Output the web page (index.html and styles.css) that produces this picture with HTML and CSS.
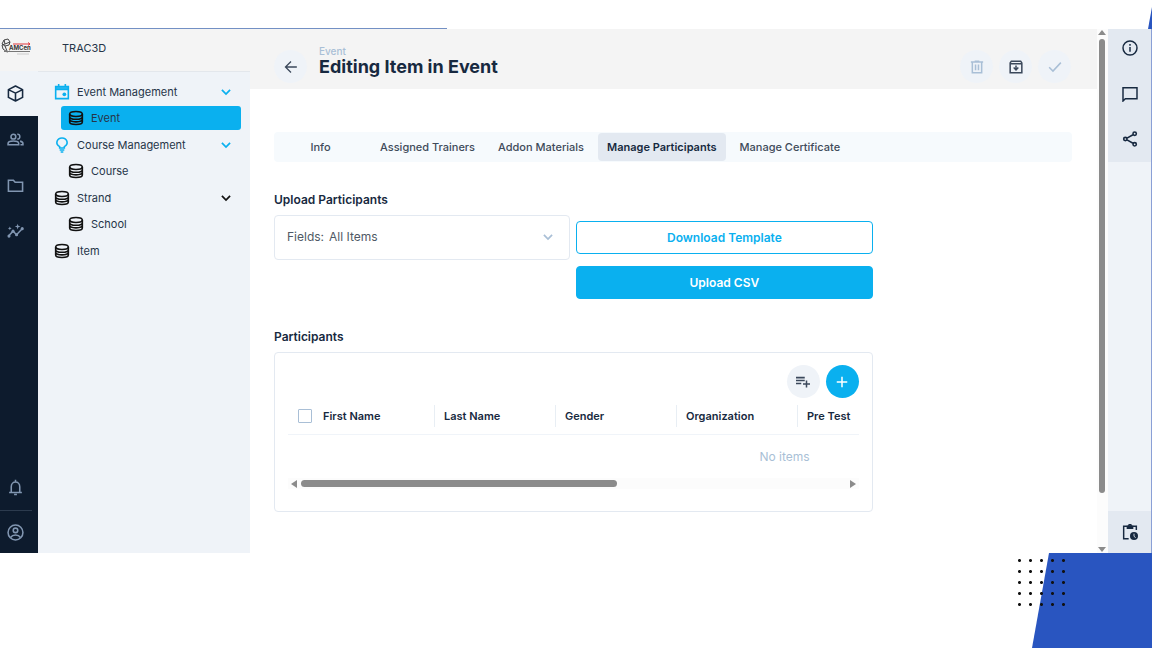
FILE: index.html
```
<!DOCTYPE html>
<html lang="en">
<head>
    <meta charset="UTF-8">
    <meta name="viewport" content="width=device-width, initial-scale=1.0">
    <title>TRAC3D - Editing Item in Event</title>
    <link rel="stylesheet" href="styles.css">
</head>
<body>
    <!-- Shared icons -->
    <svg class="sprite" aria-hidden="true">
        <symbol id="database" viewBox="0 0 24 24">
            <g fill="none" stroke="currentColor" stroke-width="2.4">
                <ellipse cx="12" cy="6" rx="9.5" ry="3.8"/>
                <path d="M2.5 6v12c0 2.2 4.2 3.8 9.5 3.8s9.5-1.6 9.5-3.8V6M2.5 10c0 2.2 4.2 3.8 9.5 3.8s9.5-1.6 9.5-3.8M2.5 14c0 2.2 4.2 3.8 9.5 3.8s9.5-1.6 9.5-3.8"/>
            </g>
        </symbol>
        <symbol id="chevron" viewBox="0 0 24 24">
            <path d="M5 8.5l7 7 7-7" fill="none" stroke="currentColor" stroke-width="3"/>
        </symbol>
    </svg>

    <div class="top-line"></div>

    <div class="app">
        <!-- Module bar -->
        <nav class="modules" aria-label="Modules">
            <a href="#" class="logo" aria-label="AMCen">
                <svg width="32" height="18" viewBox="0 0 32 18">
                    <g fill="none" stroke="#444" stroke-width="1">
                        <path d="M4 2l4-1 2 3-1 3-4 1-3-2zM4 2l1 4-3 1M5 6l5-2M2 7l1 4 4 3 3-1M5 8l2 5"/>
                    </g>
                    <text x="9" y="12" class="logo-text">AMCen</text>
                    <path d="M13 6h17M28 4.5l2 1.5-2 1.5" fill="none" stroke="#e0383e" stroke-width="1"/>
                    <path d="M4 13.5h26" stroke="#777" stroke-width="1"/>
                    <path d="M17 16h12" stroke="#ccc" stroke-width="1"/>
                </svg>
            </a>
            <a href="#" class="module active" aria-label="Content">
                <svg viewBox="0 0 24 24" fill="none" stroke="currentColor" stroke-width="2.2" stroke-linejoin="round"><path d="M12 1.5l10 5v11l-10 5-10-5v-11zM2 6.5l10 5 10-5M12 11.5v11"/></svg>
            </a>
            <a href="#" class="module" aria-label="Users">
                <svg viewBox="0 0 24 24" fill="none" stroke="currentColor" stroke-width="2.2"><circle cx="9" cy="8" r="3.4"/><path d="M1.5 19.5v-2c0-2.5 3.5-3.5 7.5-3.5s7.5 1 7.5 3.5v2zM14.5 4.5c4.8-.5 4.8 7.4 0 6.9M18.5 14.3c2.5.6 4 1.7 4 3.4v1.8h-3.5"/></svg>
            </a>
            <a href="#" class="module" aria-label="Files">
                <svg viewBox="0 0 24 24" fill="none" stroke="currentColor" stroke-width="2.2"><path d="M2 4.5h7l2.5 3H22v12.5H2z"/></svg>
            </a>
            <a href="#" class="module" aria-label="Insights">
                <svg viewBox="0 0 24 24" fill="none" stroke="currentColor" stroke-width="2.2"><path d="M2.5 18l6-6.5 5 5L21.5 8"/><g fill="currentColor" stroke="none"><circle cx="2.8" cy="18.5" r="2.2"/><circle cx="8.5" cy="11.5" r="2.2"/><circle cx="13.5" cy="16.5" r="2.2"/><circle cx="21.5" cy="8" r="2.2"/><path d="M15 1l1 3 3 1-3 1-1 3-1-3-3-1 3-1zM4 5l.8 1.8 1.8.8-1.8.8L4 10.2l-.8-1.8-1.8-.8 1.8-.8z"/></g></svg>
            </a>
            <div class="modules-bottom">
                <a href="#" class="module" aria-label="Notifications">
                    <svg viewBox="0 0 24 24" fill="none" stroke="currentColor" stroke-width="2.2"><path d="M3 19h18M6 19v-8c0-9 12-9 12 0v8M12 1v3.5M10 22h4"/></svg>
                </a>
                <a href="#" class="module profile" aria-label="Profile">
                    <svg viewBox="0 0 24 24" fill="none" stroke="currentColor" stroke-width="2.2"><circle cx="12" cy="12" r="10.5"/><circle cx="12" cy="9" r="3.2"/><path d="M5 19c3-4.5 11-4.5 14 0"/></svg>
                </a>
            </div>
        </nav>

        <!-- Collections -->
        <nav class="sidebar" aria-label="Collections">
            <div class="project">TRAC3D</div>
            <div class="collections">
                <a href="#" class="group">
                    <svg class="icon accent" viewBox="0 0 24 24" fill="none" stroke="currentColor" stroke-width="2.4"><path d="M2.5 4h19v18h-19zM2.5 8h19M7 0v4M17 0v4"/><path d="M2.5 6h19"/><circle cx="15.5" cy="15.5" r="2.8" fill="currentColor" stroke="none"/></svg>
                    Event Management
                    <svg class="chevron accent"><use href="#chevron"/></svg>
                </a>
                <a href="#" class="child selected"><svg class="icon"><use href="#database"/></svg>Event</a>
                <a href="#" class="group">
                    <svg class="icon accent" viewBox="0 0 24 24" fill="none" stroke="currentColor" stroke-width="2.4"><path d="M8.5 16.5v-2C1 10.5 4.500 1.5 12 1.5s11 9 3.5 13v2zM8.5 19.5h7M10 22.500h4"/></svg>
                    Course Management
                    <svg class="chevron accent"><use href="#chevron"/></svg>
                </a>
                <a href="#" class="child"><svg class="icon"><use href="#database"/></svg>Course</a>
                <a href="#" class="group">
                    <svg class="icon"><use href="#database"/></svg>
                    Strand
                    <svg class="chevron"><use href="#chevron"/></svg>
                </a>
                <a href="#" class="child"><svg class="icon"><use href="#database"/></svg>School</a>
                <a href="#" class="group"><svg class="icon"><use href="#database"/></svg>Item</a>
            </div>
        </nav>

        <!-- Item editor -->
        <main class="main">
            <header class="header">
                <button class="round back" aria-label="Back">
                    <svg viewBox="0 0 24 24" fill="none" stroke="currentColor" stroke-width="2.2"><path d="M22 12H3M12 2.5L2.5 12l9.5 9.5"/></svg>
                </button>
                <div class="headline">
                    <a href="#">Event</a>
                    <h1>Editing Item in Event</h1>
                </div>
                <div class="actions">
                    <button class="round muted" aria-label="Delete">
                        <svg viewBox="0 0 24 24" fill="none" stroke="currentColor" stroke-width="2.6"><path d="M1.5 3.5h21M8 2h8M4 3.5v18.5h16V3.5M9.5 7.5v10M14.5 7.5v10"/></svg>
                    </button>
                    <button class="round" aria-label="Archive">
                        <svg viewBox="0 0 24 24" fill="none" stroke="currentColor" stroke-width="2.6"><path d="M2 5l2-3h16l2 3v17H2zM2 6.5h20M12 9.5v7M8 13l4 4 4-4"/></svg>
                    </button>
                    <button class="round muted" aria-label="Save">
                        <svg viewBox="0 0 24 24" fill="none" stroke="currentColor" stroke-width="2.6"><path d="M2 12.5l6.5 6.5L22 4.5"/></svg>
                    </button>
                </div>
            </header>

            <div class="content">
                <div class="tabs" role="tablist">
                    <button role="tab" class="tab">Info</button>
                    <button role="tab" class="tab">Assigned Trainers</button>
                    <button role="tab" class="tab">Addon Materials</button>
                    <button role="tab" class="tab active" aria-selected="true">Manage Participants</button>
                    <button role="tab" class="tab">Manage Certificate</button>
                </div>

                <section class="field">
                    <h2>Upload Participants</h2>
                    <div class="upload">
                        <div class="select-box">
                            <label for="fields">Fields:</label>
                            <select id="fields">
                                <option>All Items</option>
                            </select>
                            <svg class="chevron"><use href="#chevron"/></svg>
                        </div>
                        <div class="upload-buttons">
                            <button class="btn outline">Download Template</button>
                            <button class="btn">Upload CSV</button>
                        </div>
                    </div>
                </section>

                <section class="field">
                    <h2>Participants</h2>
                    <div class="card">
                        <div class="card-actions">
                            <button class="round" aria-label="Add existing">
                                <svg viewBox="0 0 24 24" fill="none" stroke="currentColor" stroke-width="2.6"><path d="M0 4.5h15M0 9.5h15M0 14.5h9M18 9.5v12M12 15.5h12"/></svg>
                            </button>
                            <button class="round primary" aria-label="Create new">
                                <svg viewBox="0 0 24 24" fill="none" stroke="currentColor" stroke-width="2.6"><path d="M12 3v18M3 12h18"/></svg>
                            </button>
                        </div>
                        <div class="table-wrap">
                            <table>
                                <thead>
                                    <tr>
                                        <th class="first"><label><input type="checkbox">First Name</label></th>
                                        <th>Last Name</th>
                                        <th>Gender</th>
                                        <th>Organization</th>
                                        <th>Pre Test</th>
                                        <th></th>
                                        <th></th>
                                        <th></th>
                                    </tr>
                                </thead>
                                <tbody>
                                    <tr><td colspan="8">No items</td></tr>
                                </tbody>
                            </table>
                        </div>
                        <div class="scroll-x">
                            <span class="arrow left"></span>
                            <div class="track"><div class="thumb"></div></div>
                            <span class="arrow right"></span>
                        </div>
                    </div>
                </section>
            </div>
        </main>

        <div class="scroll-y">
            <span class="arrow up"></span>
            <div class="track"><div class="thumb"></div></div>
            <span class="arrow down"></span>
        </div>

        <!-- Drawer shortcuts -->
        <aside class="drawer">
            <div class="drawer-top">
                <button aria-label="Information">
                    <svg viewBox="0 0 24 24" fill="none" stroke="currentColor" stroke-width="2.2"><circle cx="12" cy="12" r="10.5"/><path d="M12 10.5V17.5M12 6v2.5"/></svg>
                </button>
                <button aria-label="Comments">
                    <svg viewBox="0 0 24 24" fill="none" stroke="currentColor" stroke-width="2.2"><path d="M1.5 2.5h21v16.5H5l-3.5 3.5z"/></svg>
                </button>
                <button aria-label="Share">
                    <svg viewBox="0 0 24 24" fill="none" stroke="currentColor" stroke-width="2.4"><circle cx="19" cy="4" r="2.5"/><circle cx="5" cy="12" r="2.5"/><circle cx="19" cy="20" r="2.5"/><path d="M7.5 10.7l9-5M7.5 13.3l9 5"/></svg>
                </button>
            </div>
            <button class="drawer-bottom" aria-label="Activity">
                <svg viewBox="0 0 24 24" fill="none" stroke="currentColor" stroke-width="2.2"><path d="M10 22H2.5V3.5h19V9"/><path d="M7 2.5h10v5H7z" fill="currentColor" stroke="none"/><circle cx="12" cy="2.5" r="1.8"/><circle cx="18" cy="18" r="6" fill="currentColor" stroke="none"/><path d="M18 14.5v4l2.5 2" stroke="#e3e9f1" stroke-width="1.3"/></svg>
            </button>
        </aside>
    </div>

    <!-- Slide decoration -->
    <svg class="corner-top" viewBox="0 0 4 22" aria-hidden="true"><path d="M4 0v22H0z" fill="#2955c0"/></svg>
    <footer class="footer">
        <div class="shape"></div>
        <div class="dots"></div>
    </footer>
</body>
</html>
```
FILE: styles.css
```
* {
    box-sizing: border-box;
}
body {
    font-family: Inter, "Liberation Sans", sans-serif;
    font-size: 12px;
    margin: 0;
    min-height: 100vh;
    display: flex;
    flex-direction: column;
    position: relative;
    background-color: #ffffff;
    color: #263548;
    overflow-x: hidden;
}
a {
    color: inherit;
    text-decoration: none;
}
button {
    font-family: inherit;
    border: none;
    padding: 0;
    cursor: pointer;
}
h1, h2 {
    margin: 0;
    color: #172940;
}
.sprite {
    display: none;
}
.top-line {
    width: 447px;
    height: 1px;
    margin-top: 28px;
    background-color: #7390c4;
}
.app {
    flex: 1;
    display: flex;
    min-height: 524px;
}

/* Module bar */
.modules {
    width: 38px;
    display: flex;
    flex-direction: column;
    background-color: #0d1b2d;
}
.logo {
    height: 42px;
    padding-top: 9px;
    background-color: #f4f4f4;
}
.logo-text {
    font-size: 6px;
    font-weight: 700;
    fill: #333;
}
.module {
    height: 46px;
    padding-left: 7px;
    display: flex;
    align-items: center;
    color: #8196b1;
}
.module svg {
    width: 17px;
    height: 17px;
}
.module.active {
    height: 45px;
    background-color: #eff3f8;
    color: #172940;
}
.modules-bottom {
    margin-top: auto;
}
.module.profile {
    height: 43px;
    margin-right: 6px;
    border-top: 1px solid #2c3b4e;
}

/* Collections */
.sidebar {
    width: 212px;
    background-color: #eff3f8;
    font-size: 11px;
}
.project {
    height: 43px;
    padding: 0 24px;
    line-height: 38px;
    background-color: #f4f4f4;
    border-bottom: 1px solid #e3e7ec;
}
.collections {
    padding: 7px 9px 0 16px;
}
.group, .child {
    display: flex;
    align-items: center;
    gap: 7px;
    border-radius: 3px;
}
.group {
    height: 26px;
}
.child {
    height: 24px;
    margin: 1px 0 2px 7px;
    padding-left: 7px;
}
.child.selected {
    background-color: #0ab0ef;
}
.icon {
    width: 16px;
    height: 16px;
    color: #111;
}
.chevron {
    width: 14px;
    height: 14px;
    margin-left: auto;
    margin-right: 8px;
    color: #111;
}
.accent {
    color: #0ab0ef;
}

/* Editor */
.main {
    flex: 1;
    min-width: 0;
}
.header {
    height: 60px;
    padding: 14px 26px 0 24px;
    display: flex;
    background-color: #f4f4f4;
}
.round {
    width: 33px;
    height: 33px;
    display: flex;
    align-items: center;
    justify-content: center;
    border-radius: 50%;
    background-color: #eff3f8;
    color: #3b485b;
}
.round svg {
    width: 14px;
    height: 14px;
}
.round.muted {
    color: #a9bfd6;
}
.round.primary {
    background-color: #0ab0ef;
    color: #ffffff;
}
.header .round {
    margin-top: 7px;
}
.headline {
    margin-left: 12px;
}
.headline a {
    display: block;
    font-size: 10px;
    line-height: 16px;
    color: #a9bfd6;
    font-weight: 500;
}
.headline h1 {
    font-size: 18px;
    line-height: 16px;
    font-weight: 700;
}
.actions {
    margin-left: auto;
    display: flex;
    gap: 6px;
}
.content {
    padding: 43px 25px 41px 24px;
}
.tabs {
    height: 30px;
    padding: 1px;
    display: flex;
    gap: 5px;
    background-color: #f6fafd;
    border-radius: 4px;
}
.tab {
    min-width: 91px;
    padding: 0 9px;
    font-size: 11px;
    font-weight: 500;
    background: none;
    color: #3f4b5a;
    border-radius: 4px;
}
.tab.active {
    background-color: #e3e9f1;
    color: #172940;
    font-weight: 600;
}
.field {
    width: 75%;
    margin-top: 30px;
}
.field h2 {
    font-size: 12px;
    font-weight: 600;
    line-height: 16px;
    margin-bottom: 7px;
}
.upload {
    display: grid;
    grid-template-columns: 1fr 1fr;
    gap: 6px;
    align-items: start;
}
.select-box {
    height: 45px;
    padding: 0 0 2px 12px;
    display: flex;
    align-items: center;
    gap: 5px;
    position: relative;
    border: 1px solid #e3e9f1;
    border-radius: 4px;
    color: #4f5965;
}
.select-box select {
    flex: 1;
    height: 100%;
    appearance: none;
    border: none;
    padding: 0;
    background: none;
    font: inherit;
    color: inherit;
}
.select-box .chevron {
    position: absolute;
    right: 6px;
    color: #a9bfd6;
    pointer-events: none;
}
.upload-buttons {
    display: flex;
    flex-direction: column;
    gap: 12px;
    padding-top: 6px;
}
.btn {
    height: 33px;
    font-size: 12px;
    font-weight: 600;
    background-color: #0ab0ef;
    color: #ffffff;
    border: 1px solid #0ab0ef;
    border-radius: 4px;
}
.btn.outline {
    background-color: #ffffff;
    color: #0ab0ef;
}

/* Participants table */
.card {
    padding: 12px 13px;
    height: 160px;
    border: 1px solid #e3e9f1;
    border-radius: 4px;
}
.card-actions {
    display: flex;
    justify-content: flex-end;
    gap: 6px;
}
.table-wrap {
    overflow: hidden;
}
table {
    width: 993px;
    table-layout: fixed;
    border-collapse: collapse;
}
th {
    height: 36px;
    padding: 0 0 0 10px;
    text-align: left;
    font-size: 11px;
    font-weight: 600;
    color: #172940;
    border-bottom: 1px solid #f0f4f9;
    background: linear-gradient(#e8eef4, #e8eef4) left center / 1px 22px no-repeat;
}
th.first {
    width: 146px;
    background: none;
}
th label {
    display: flex;
    align-items: center;
    gap: 11px;
}
th input {
    appearance: none;
    width: 14px;
    height: 14px;
    margin: 0;
    border: 1px solid #a9bfd6;
    border-radius: 1px;
}
td {
    height: 44px;
    padding: 0;
    text-align: center;
    color: #a9bfd6;
}

/* Scroll bars */
.scroll-x, .scroll-y {
    display: flex;
    align-items: center;
    background-color: #fcfcfc;
}
.scroll-x {
    height: 11px;
    padding: 0 3px;
    gap: 4px;
}
.scroll-y {
    width: 11px;
    flex-direction: column;
    padding: 1px 1px 1px 0;
    gap: 4px;
}
.track {
    flex: 1;
}
.thumb {
    background-color: #8b8b8b;
    border-radius: 4px;
}
.scroll-x .thumb {
    width: 58%;
    height: 7px;
}
.scroll-y .thumb {
    width: 6px;
    height: 90%;
}
.arrow {
    border: 4px solid transparent;
}
.arrow.left {
    border-left: none;
    border-right: 6px solid #8b8b8b;
}
.arrow.right {
    border-right: none;
    border-left: 6px solid #8b8b8b;
}
.arrow.up {
    border-top: none;
    border-bottom: 5px solid #8b8b8b;
}
.arrow.down {
    border-bottom: none;
    border-top: 5px solid #8b8b8b;
}

/* Drawer */
.drawer {
    width: 44px;
    display: flex;
    flex-direction: column;
    justify-content: space-between;
    background-color: #eff3f8;
    border-right: 1px solid #8aa0d6;
}
.drawer-top {
    height: 133px;
    padding-bottom: 4px;
    display: flex;
    flex-direction: column;
    justify-content: space-between;
    background-color: #e3e9f1;
}
.drawer button {
    display: flex;
    align-items: center;
    justify-content: center;
    width: 100%;
    height: 38px;
    background-color: #e3e9f1;
    color: #172940;
}
.drawer .drawer-bottom {
    height: 42px;
}
.drawer svg {
    width: 16px;
    height: 16px;
}

/* Slide decoration */
.corner-top {
    position: absolute;
    top: 7px;
    right: 0;
    width: 4px;
    height: 22px;
}
.footer {
    height: 95px;
    position: relative;
}
.shape {
    width: 120px;
    height: 100%;
    margin-left: auto;
    background-color: #2955c0;
    clip-path: polygon(17px 0, 100% 0, 100% 100%, 0 100%);
}
.dots {
    position: absolute;
    top: 2px;
    right: 83px;
    width: 55px;
    height: 55px;
    background: radial-gradient(circle, #111 1px, transparent 2px) 0 0 / 11px 11px;
}
```
